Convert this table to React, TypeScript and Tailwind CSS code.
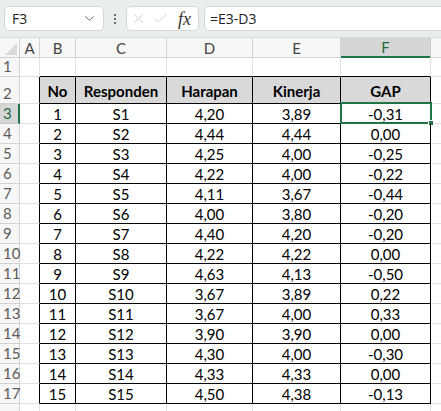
import { ChevronDown, X, Check } from 'lucide-react';

const rows: [number, string, string, string, string][] = [
  [1, 'S1', '4,20', '3,89', '-0,31'],
  [2, 'S2', '4,44', '4,44', '0,00'],
  [3, 'S3', '4,25', '4,00', '-0,25'],
  [4, 'S4', '4,22', '4,00', '-0,22'],
  [5, 'S5', '4,11', '3,67', '-0,44'],
  [6, 'S6', '4,00', '3,80', '-0,20'],
  [7, 'S7', '4,40', '4,20', '-0,20'],
  [8, 'S8', '4,22', '4,22', '0,00'],
  [9, 'S9', '4,63', '4,13', '-0,50'],
  [10, 'S10', '3,67', '3,89', '0,22'],
  [11, 'S11', '3,67', '4,00', '0,33'],
  [12, 'S12', '3,90', '3,90', '0,00'],
  [13, 'S13', '4,30', '4,00', '-0,30'],
  [14, 'S14', '4,33', '4,33', '0,00'],
  [15, 'S15', '4,50', '4,38', '-0,13'],
];

const cols = 'grid grid-cols-[20px_20px_36px_91px_86px_88px_90px_1fr]';
const grid = 'border-r border-b border-[#e1e1e1]';
const font = { fontFamily: 'Lato, Carlito, Calibri, sans-serif' };

function RowHead({ n, active }: { n: number; active?: boolean }) {
  return (
    <div
      className={
        active
          ? 'flex items-end pl-[3px] pb-px text-[15px] leading-[18px] text-[#1e6b41] bg-[#d6d6d6] border-b border-[#c8c8c8] border-r-2 border-r-[#217346]'
          : 'flex items-end pl-[3px] pb-px text-[15px] leading-[18px] text-[#5c5c5c] bg-[#f7f7f7] border-b border-r border-[#d2d2d2]'
      }
    >
      {n}
    </div>
  );
}

export default function App() {
  return (
    <div className="w-[441px] h-[411px] overflow-hidden bg-white select-none" style={font}>
      {/* Formula bar */}
      <div className="h-[38px] bg-[#e8eeeb] flex items-start pt-[6px] pl-[4px] border-b border-[#d7dcda]">
        <div className="w-[100px] h-[25px] bg-white rounded-[5px] border border-[#d3d8d6] flex items-center justify-between pl-[7px] pr-[6px]">
          <span className="text-[14px] text-[#222]" style={{ fontFamily: '"Open Sans", sans-serif' }}>F3</span>
          <ChevronDown className="w-[15px] h-[15px] text-[#555]" strokeWidth={1.4} />
        </div>
        <div className="w-[22px] h-[25px] flex flex-col items-center justify-center gap-[2px]">
          <span className="w-[2px] h-[2px] bg-[#444] rounded-full" />
          <span className="w-[2px] h-[2px] bg-[#444] rounded-full" />
          <span className="w-[2px] h-[2px] bg-[#444] rounded-full" />
        </div>
        <div className="w-[73px] h-[25px] bg-white rounded-[5px] border border-[#d3d8d6] flex items-center pl-[3px] gap-[5px]">
          <X className="w-[17px] h-[17px] text-[#c8c8c8]" strokeWidth={1.1} />
          <Check className="w-[17px] h-[17px] text-[#c8c8c8]" strokeWidth={1.1} />
          <span className="text-[18px] italic text-[#333] ml-[4px] leading-none" style={{ fontFamily: '"Liberation Serif", serif' }}>fx</span>
        </div>
        <div className="ml-[5px] flex-1 h-[25px] bg-white rounded-l-[5px] border border-r-0 border-[#d3d8d6] flex items-center pl-[5px]">
          <span className="text-[14px] text-[#222]" style={{ fontFamily: '"Open Sans", sans-serif' }}>=E3-D3</span>
        </div>
      </div>

      {/* Column headers */}
      <div className={`${cols} h-[19px] text-[15px] leading-[18px]`}>
        <div className="relative bg-[#f7f7f7] border-r border-b border-[#d2d2d2]">
          <div className="absolute right-[2px] bottom-[2px] w-0 h-0 border-l-[12px] border-l-transparent border-b-[12px] border-b-[#dadada]" />
        </div>
        {['A', 'B', 'C', 'D', 'E'].map((c) => (
          <div key={c} className="flex items-center justify-center bg-[#f7f7f7] border-r border-b border-[#d2d2d2] text-[#444]">
            {c}
          </div>
        ))}
        <div className="flex items-center justify-center bg-[#d6d6d6] border-r border-[#c8c8c8] border-b-2 border-b-[#217346] text-[#1e6b41]">
          F
        </div>
        <div className="bg-[#f7f7f7] border-b border-[#d2d2d2]" />
      </div>

      {/* Row 1 */}
      <div className={`${cols} h-[20px]`}>
        <RowHead n={1} />
        <div className={grid} />
        {[0, 1, 2, 3, 4].map((i) => (
          <div key={i} className="border-r border-[#e1e1e1] border-b border-b-black" />
        ))}
        <div className="border-b border-[#e1e1e1]" />
      </div>

      {/* Row 2 - table header */}
      <div className={`${cols} h-[27px] text-[15px] leading-[18px] text-black`}>
        <RowHead n={2} />
        <div className="border-b border-[#e1e1e1] border-r border-r-black" />
        {['No', 'Responden', 'Harapan', 'Kinerja', 'GAP'].map((h) => (
          <div key={h} className="flex items-end justify-center pb-[3px] font-bold bg-[#d9d9d9] border-r border-b border-black">
            {h}
          </div>
        ))}
        <div className="border-b border-[#e1e1e1]" />
      </div>

      {/* Data rows */}
      {rows.map((r, idx) => (
        <div key={r[0]} className={`${cols} h-[20px] text-[15px] leading-[18px] text-black`}>
          <RowHead n={idx + 3} active={idx === 0} />
          <div className="border-b border-[#e1e1e1] border-r border-r-black" />
          {r.map((v, i) => (
            <div key={i} className="relative flex items-center justify-center border-r border-b border-black">
              {v}
              {idx === 0 && i === 4 && (
                <div className="absolute -left-px -top-[2px] -right-[2px] -bottom-px border-2 border-[#217346] pointer-events-none">
                  <div className="absolute -right-[4px] -bottom-[4px] w-[6px] h-[6px] bg-[#217346] border border-white" />
                </div>
              )}
            </div>
          ))}
          <div className="border-b border-[#e1e1e1]" />
        </div>
      ))}

      {/* Row 18 (partial) */}
      <div className={`${cols} h-[20px]`}>
        <div className="bg-[#f7f7f7] border-r border-[#d2d2d2]" />
        {[0, 1, 2, 3, 4, 5].map((i) => (
          <div key={i} className={grid} />
        ))}
        <div />
      </div>
    </div>
  );
}
